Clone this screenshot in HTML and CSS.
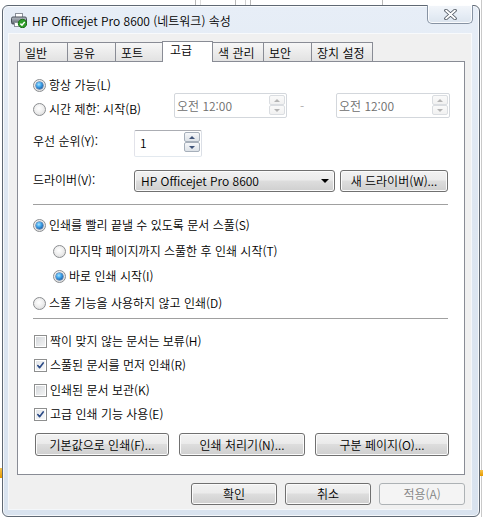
FILE: index.html
```html
<!DOCTYPE html>
<html lang="ko">
<head>
<meta charset="utf-8">
<title>HP Officejet Pro 8600 속성</title>
<link rel="stylesheet" href="styles.css">
</head>
<body>
<div class="desktop">
  <div class="bg-line bl1"></div>
  <div class="bg-line bl2"></div>
  <div class="bg-line bl3"></div>
  <div class="bg-line bl4"></div>
  <div class="bg-line bl5"></div>
  <div class="bg-line bl6"></div>
  <div class="bg-edge-right"></div>
  <div class="bg-mark mark-left"></div>
  <div class="bg-mark mark-right"></div>

  <div class="window">
    <div class="titlebar">
      <svg class="app-icon" viewBox="0 0 16 16" width="16" height="16">
        <defs>
          <linearGradient id="pbody" x1="0" y1="0" x2="0" y2="1">
            <stop offset="0" stop-color="#b9c0c8"/>
            <stop offset="1" stop-color="#59616b"/>
          </linearGradient>
        </defs>
        <rect x="4.5" y="1.5" width="7" height="4" fill="#fff" stroke="#8a9099"/>
        <rect x="0.5" y="5" width="15" height="7" rx="1.5" fill="url(#pbody)" stroke="#4a515a"/>
        <rect x="3.5" y="10.5" width="9" height="4" fill="#fff" stroke="#8a9099"/>
        <circle cx="11.5" cy="11.5" r="4.2" fill="#2f9e2a" stroke="#1d6e19"/>
        <path d="M9.4 11.6 L11 13.2 L13.7 9.9" stroke="#fff" stroke-width="1.5" fill="none"/>
      </svg>
      <span class="title">HP Officejet Pro 8600 (네트워크) 속성</span>
      <div class="close-btn">
        <svg viewBox="0 0 13 11" width="13" height="11">
          <path d="M2 1.5 L11 9.5 M11 1.5 L2 9.5" stroke="#4f5761" stroke-width="3.6" stroke-linecap="round"/>
          <path d="M2 1.5 L11 9.5 M11 1.5 L2 9.5" stroke="#ffffff" stroke-width="1.8" stroke-linecap="round"/>
        </svg>
      </div>
    </div>

    <div class="client">
      <div class="tabs">
        <div class="tab w49">일반</div>
        <div class="tab w49">공유</div>
        <div class="tab w48">포트</div>
        <div class="tab tab-active w51">고급</div>
        <div class="tab w52">색 관리</div>
        <div class="tab w49">보안</div>
        <div class="tab w62">장치 설정</div>
      </div>

      <div class="panel">
        <div class="row r-always">
          <span class="radio radio-on"></span><span class="lbl">항상 가능(L)</span>
        </div>

        <div class="row-time">
          <div class="time-label">
            <span class="radio"></span><span class="lbl">시간 제한: 시작(B)</span>
          </div>
          <div class="timebox w113">
            <span class="tb-text">오전 12:00</span>
            <div class="spin spin-disabled">
              <span class="spin-btn"><span class="arr-up"></span></span>
              <span class="spin-btn"><span class="arr-down"></span></span>
            </div>
          </div>
          <span class="dash">-</span>
          <div class="timebox w114">
            <span class="tb-text">오전 12:00</span>
            <div class="spin spin-disabled">
              <span class="spin-btn"><span class="arr-up"></span></span>
              <span class="spin-btn"><span class="arr-down"></span></span>
            </div>
          </div>
        </div>

        <div class="row-field r-priority">
          <span class="field-label">우선 순위(Y):</span>
          <div class="spinbox">
            <span class="sb-text">1</span>
            <div class="spin">
              <span class="spin-btn"><span class="arr-up"></span></span>
              <span class="spin-btn"><span class="arr-down"></span></span>
            </div>
          </div>
        </div>

        <div class="row-field r-driver">
          <span class="field-label driver-label">드라이버(V):</span>
          <div class="combo">
            <span>HP Officejet Pro 8600</span>
            <span class="combo-arrow"></span>
          </div>
          <div class="btn btn-newdriver">새 드라이버(W)...</div>
        </div>

        <div class="sep sep1"></div>

        <div class="row r-spool">
          <span class="radio radio-on"></span><span class="lbl">인쇄를 빨리 끝낼 수 있도록 문서 스풀(S)</span>
        </div>
        <div class="row sub r-sub1">
          <span class="radio"></span><span class="lbl">마지막 페이지까지 스풀한 후 인쇄 시작(T)</span>
        </div>
        <div class="row sub r-sub2">
          <span class="radio radio-on"></span><span class="lbl">바로 인쇄 시작(I)</span>
        </div>
        <div class="row r-nospool">
          <span class="radio"></span><span class="lbl">스풀 기능을 사용하지 않고 인쇄(D)</span>
        </div>

        <div class="sep sep2"></div>

        <div class="row r-chk1">
          <span class="check"></span><span class="lbl">짝이 맞지 않는 문서는 보류(H)</span>
        </div>
        <div class="row r-chk2">
          <span class="check check-on"><svg viewBox="0 0 11 11" width="11" height="11"><path d="M2.2 5.6 L4.4 8.2 L8.8 2.4" stroke="#2b4a86" stroke-width="2" fill="none" stroke-linecap="round" stroke-linejoin="round"/></svg></span><span class="lbl">스풀된 문서를 먼저 인쇄(R)</span>
        </div>
        <div class="row r-chk3">
          <span class="check"></span><span class="lbl">인쇄된 문서 보관(K)</span>
        </div>
        <div class="row r-chk4">
          <span class="check check-on"><svg viewBox="0 0 11 11" width="11" height="11"><path d="M2.2 5.6 L4.4 8.2 L8.8 2.4" stroke="#2b4a86" stroke-width="2" fill="none" stroke-linecap="round" stroke-linejoin="round"/></svg></span><span class="lbl">고급 인쇄 기능 사용(E)</span>
        </div>

        <div class="btn-row">
          <div class="btn w134">기본값으로 인쇄(F)...</div>
          <div class="btn w126">인쇄 처리기(N)...</div>
          <div class="btn w134">구분 페이지(O)...</div>
        </div>
      </div>

      <div class="footer">
        <div class="btn btn-foot">확인</div>
        <div class="btn btn-foot">취소</div>
        <div class="btn btn-foot btn-disabled">적용(A)</div>
      </div>
    </div>
  </div>
</div>
</body>
</html>
```

FILE: styles.css
```css
* { box-sizing: border-box; }

html, body {
  margin: 0;
  padding: 0;
}

body {
  width: 483px;
  height: 517px;
  overflow: hidden;
  background: #ffffff;
  font-family: "Noto Sans CJK KR", "Noto Sans", sans-serif;
  font-size: 12px;
  font-weight: 350;
  line-height: 16px;
  color: #000;
}

.desktop {
  position: relative;
  width: 483px;
  height: 517px;
}

/* background bits of other windows */
.bg-line {
  position: absolute;
  top: 0;
  width: 1px;
  height: 6px;
  background: #b8b8b8;
}
.bl1 { left: 195px; }
.bl2 { left: 200px; background: #dcdcdc; }
.bl3 { left: 235px; }
.bl4 { left: 245px; background: #d0d0d0; }
.bl5 { left: 250px; }
.bl6 { left: 382px; }

.bg-edge-right {
  position: absolute;
  left: 481px;
  top: 0;
  width: 1px;
  height: 517px;
  background: #c9c9c9;
}

.bg-mark {
  position: absolute;
  width: 3px;
  background: linear-gradient(#f7c24a, #e59a00);
}
.mark-left { left: 0; top: 468px; height: 10px; }
.mark-right { left: 480px; top: 470px; height: 6px; }

/* window frame */
.window {
  position: absolute;
  left: 2px;
  top: 5px;
  width: 478px;
  height: 512px;
  border: 1px solid #5f6873;
  border-radius: 6px;
  background: linear-gradient(180deg, #e7eef7 0%, #dde6f1 40%, #d9e3ef 100%);
  box-shadow: inset 0 0 0 1px rgba(255, 255, 255, 0.75);
  display: flex;
  flex-direction: column;
}

.titlebar {
  height: 28px;
  display: flex;
  align-items: flex-start;
  padding-left: 8px;
  flex: none;
}

.app-icon {
  flex: none;
  margin-top: 6px;
}

.title {
  margin-left: 5px;
  margin-top: 7px;
  white-space: nowrap;
  color: #000;
}

.close-btn {
  margin-left: auto;
  margin-right: 6px;
  margin-top: -1px;
  width: 46px;
  height: 19px;
  border: 1px solid #8793a3;
  border-top: none;
  border-radius: 0 0 5px 5px;
  background: linear-gradient(180deg, #f3f6fa 0%, #e6edf5 55%, #dbe4ee 100%);
  box-shadow: inset 0 0 0 1px rgba(255, 255, 255, 0.85);
  display: flex;
  align-items: center;
  justify-content: center;
  flex: none;
}

/* client area */
.client {
  margin: 0 8px 7px 6px;
  height: 475px;
  background: #f0f0f0;
  padding: 7px 6px 4px 8px;
  display: flex;
  flex-direction: column;
  box-shadow: 0 0 0 1px rgba(255, 255, 255, 0.7);
  flex: none;
}

/* tabs */
.tabs {
  display: flex;
  align-items: flex-end;
  height: 20px;
  padding-left: 2px;
  flex: none;
}

.tab {
  height: 19px;
  border: 1px solid #898c95;
  border-bottom: none;
  background: linear-gradient(180deg, #f7f7f7 0%, #ececec 50%, #e2e2e2 100%);
  padding: 2px 0 0 5px;
  white-space: nowrap;
  margin-left: -1px;
  flex: none;
}
.tab:first-child { margin-left: 0; }

.tab-active {
  height: 21px;
  margin-bottom: -1px;
  padding: 0 0 0 7px;
  background: #ffffff;
  position: relative;
  z-index: 1;
}

.w48 { width: 48px; }
.w49 { width: 49px; }
.w51 { width: 51px; }
.w52 { width: 52px; }
.w62 { width: 62px; }

/* tab page */
.panel {
  width: 448px;
  height: 414px;
  border: 1px solid #898c95;
  background: #ffffff;
  padding: 0 0 0 15px;
  flex: none;
}

.row {
  display: flex;
  align-items: center;
  height: 16px;
}

.lbl { white-space: nowrap; }

.radio {
  flex: none;
  position: relative;
  width: 13px;
  height: 13px;
  margin-right: 3px;
  border-radius: 50%;
  border: 1px solid #8b8d90;
  background: radial-gradient(circle at 45% 40%, #ffffff 0%, #f1f1f1 40%, #d6d6d6 100%);
}

.radio-on::after {
  content: "";
  position: absolute;
  left: 2px;
  top: 2px;
  width: 7px;
  height: 7px;
  border-radius: 50%;
  background: radial-gradient(circle at 40% 35%, #a6e4ff 0%, #3ea3ea 40%, #11529c 85%, #0b3f7c 100%);
  box-shadow: 0 0 0 0.5px #1c4f8c;
}

.check {
  flex: none;
  width: 13px;
  height: 13px;
  margin-left: 1px;
  margin-right: 3px;
  border: 1px solid #8e8f8f;
  background: #fff;
  padding: 1px;
  display: flex;
  align-items: center;
  justify-content: center;
  background-image: linear-gradient(135deg, #cfd2d6 0%, #e4e6e8 50%, #f6f6f6 100%);
  background-clip: content-box;
}

.check-on {
  background-image: linear-gradient(135deg, #dfe2e6 0%, #eef0f2 50%, #fafafa 100%);
}

.check svg { display: block; }

.r-always { margin-top: 15px; }

/* time row */
.row-time {
  display: flex;
  align-items: flex-start;
  height: 25px;
}

.time-label {
  width: 141px;
  height: 16px;
  margin-top: 8px;
  display: flex;
  align-items: center;
  flex: none;
}

.timebox {
  height: 25px;
  border: 1px solid #d3d7dc;
  border-radius: 2px;
  background: #ffffff;
  display: flex;
  align-items: flex-start;
  flex: none;
}
.w113 { width: 113px; }
.w114 { width: 114px; }

.tb-text {
  padding-left: 2px;
  margin-top: 4px;
  color: #6d6d6d;
  white-space: nowrap;
}

.dash {
  width: 49px;
  padding-left: 13px;
  margin-top: 5px;
  color: #a8a8a8;
  flex: none;
}

.spin {
  width: 16px;
  height: 20px;
  margin: 1px 1px 0 auto;
  display: flex;
  flex-direction: column;
  flex: none;
}

.spin-btn {
  flex: 1;
  border: 1px solid #a6afba;
  border-radius: 2px;
  background: linear-gradient(180deg, #f7f8fa 0%, #e9ecf0 50%, #dde2e8 100%);
  display: flex;
  align-items: center;
  justify-content: center;
}

.arr-up {
  width: 0;
  height: 0;
  border-left: 3px solid transparent;
  border-right: 3px solid transparent;
  border-bottom: 3px solid #41557a;
}

.arr-down {
  width: 0;
  height: 0;
  border-left: 3px solid transparent;
  border-right: 3px solid transparent;
  border-top: 3px solid #41557a;
}

.spin-disabled .spin-btn {
  border-color: #dadde1;
  background: linear-gradient(180deg, #fafafa 0%, #f1f1f1 100%);
}
.spin-disabled .arr-up { border-bottom-color: #b4b4b4; }
.spin-disabled .arr-down { border-top-color: #b4b4b4; }

/* priority / driver */
.row-field {
  display: flex;
  align-items: flex-start;
}

.r-priority { margin-top: 12px; height: 27px; }
.r-driver { margin-top: 13px; height: 22px; }

.field-label {
  width: 101px;
  margin-top: 3px;
  white-space: nowrap;
  flex: none;
}
.driver-label { margin-top: 2px; }

.spinbox {
  width: 68px;
  height: 27px;
  border: 1px solid;
  border-color: #abadb3 #dbdfe6 #e3e9ef #e2e3ea;
  border-radius: 2px;
  background: #fff;
  display: flex;
  align-items: flex-start;
  flex: none;
}

.sb-text {
  padding-left: 5px;
  margin-top: 4px;
}

.combo {
  width: 201px;
  height: 22px;
  border: 1px solid #707070;
  border-radius: 3px;
  background: linear-gradient(180deg, #f2f2f2 0%, #ebebeb 45%, #dddddd 50%, #cfcfcf 100%);
  box-shadow: inset 0 0 0 1px #fbfbfb;
  display: flex;
  align-items: center;
  justify-content: space-between;
  padding: 0 5px 0 6px;
  white-space: nowrap;
  flex: none;
}

.combo-arrow {
  width: 0;
  height: 0;
  border-left: 4px solid transparent;
  border-right: 4px solid transparent;
  border-top: 4px solid #000;
}

.btn {
  display: flex;
  align-items: center;
  justify-content: center;
  height: 23px;
  border: 1px solid #707070;
  border-radius: 3px;
  background: linear-gradient(180deg, #f2f2f2 0%, #ebebeb 45%, #dddddd 50%, #cfcfcf 100%);
  box-shadow: inset 0 0 0 1px #fbfbfb;
  white-space: nowrap;
  flex: none;
}

.btn-newdriver {
  width: 108px;
  height: 22px;
  margin-left: 5px;
}

.sep {
  height: 1px;
  width: 415px;
  background: #a0a0a0;
}
.sep1 { margin-top: 12px; }
.sep2 { margin-top: 7px; }

.r-spool { margin-top: 12px; }
.sub { padding-left: 20px; }
.r-sub1 { margin-top: 10px; }
.r-sub2 { margin-top: 9px; }
.r-nospool { margin-top: 11px; }

.r-chk1 { margin-top: 14px; }
.r-chk2 { margin-top: 8px; }
.r-chk3 { margin-top: 9px; }
.r-chk4 { margin-top: 8px; }

.btn-row {
  display: flex;
  gap: 10px;
  margin-top: 11px;
  padding-left: 2px;
}
.w134 { width: 134px; }
.w126 { width: 126px; }

/* dialog buttons */
.footer {
  display: flex;
  justify-content: flex-end;
  gap: 8px;
  margin-top: 8px;
  flex: none;
}

.btn-foot {
  width: 86px;
  height: 22px;
}

.btn-disabled {
  border-color: #adb2b5;
  background: #f4f4f4;
  box-shadow: none;
  color: #838383;
}
```
